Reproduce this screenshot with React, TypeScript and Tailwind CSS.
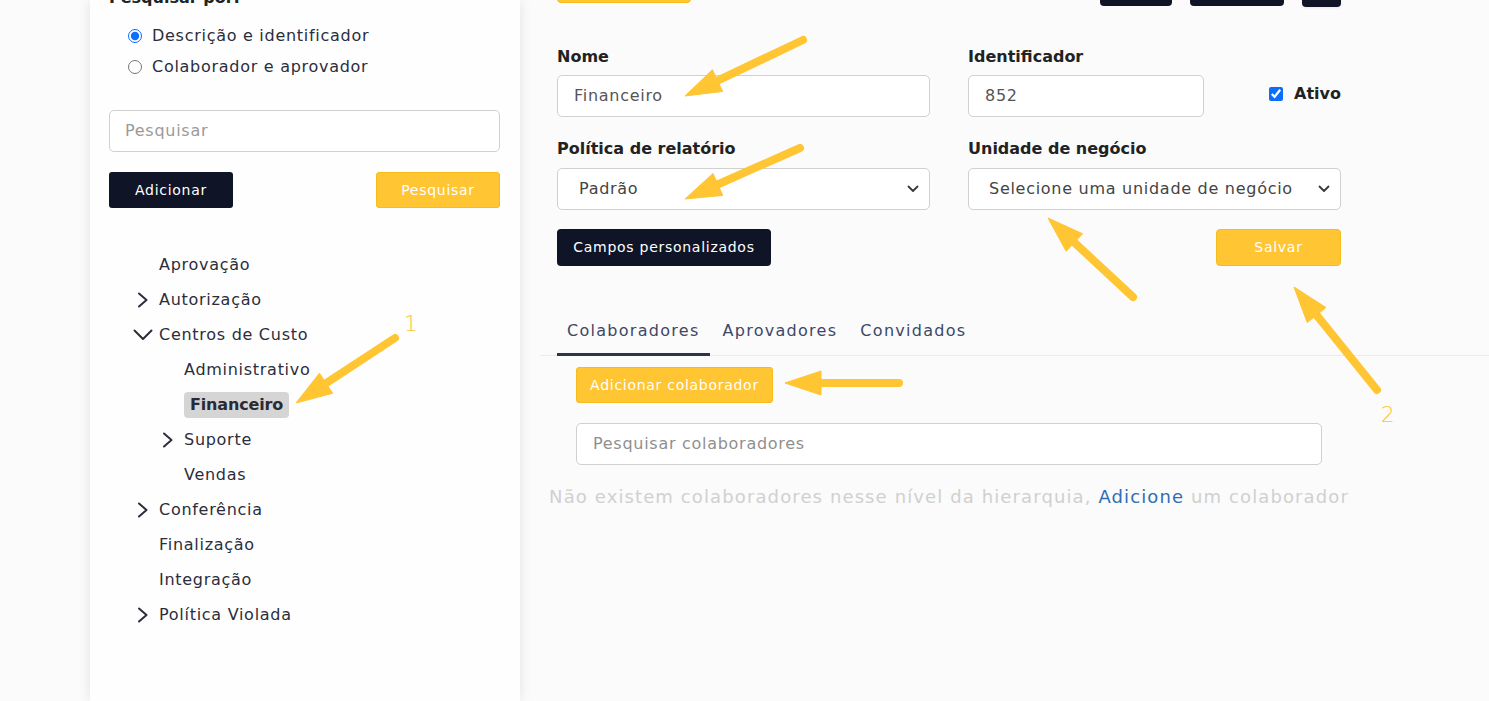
import React from "react";

type Pt = [number, number];

function Arrow({ from, to }: { from: Pt; to: Pt }) {
  const [x1, y1] = from;
  const [x2, y2] = to;
  const dx = x2 - x1;
  const dy = y2 - y1;
  const len = Math.hypot(dx, dy);
  const ux = dx / len;
  const uy = dy / len;
  const L = 36;
  const W = 12;
  const bx = x2 - ux * L;
  const by = y2 - uy * L;
  const nx = -uy;
  const ny = ux;
  const pts = `${x2},${y2} ${bx + nx * W},${by + ny * W} ${bx - nx * W},${by - ny * W}`;
  return (
    <g>
      <line x1={x1} y1={y1} x2={bx + ux * 4} y2={by + uy * 4} stroke="#ffc532" strokeWidth={8} strokeLinecap="round" />
      <polygon points={pts} fill="#ffc532" stroke="#ffc532" strokeWidth={1} strokeLinejoin="round" />
    </g>
  );
}

function ChevronRight() {
  return (
    <svg width="12" height="16" viewBox="0 0 12 16" className="block">
      <polyline points="2,1.5 9.5,8 2,14.5" fill="none" stroke="#2b2d3c" strokeWidth="2" strokeLinecap="round" strokeLinejoin="round" />
    </svg>
  );
}

function ChevronDown() {
  return (
    <svg width="20" height="12" viewBox="0 0 20 12" className="block">
      <polyline points="1.5,1.5 10,10 18.5,1.5" fill="none" stroke="#2b2d3c" strokeWidth="2" strokeLinecap="round" strokeLinejoin="round" />
    </svg>
  );
}

function SelectChevron() {
  return (
    <svg width="12" height="8" viewBox="0 0 12 8" className="block">
      <polyline points="1.5,1.5 6,6 10.5,1.5" fill="none" stroke="#343a40" strokeWidth="1.8" strokeLinecap="round" strokeLinejoin="round" />
    </svg>
  );
}

type TreeItem = { label: string; level: 1 | 2; chevron?: "right" | "down"; selected?: boolean };

const tree: TreeItem[] = [
  { label: "Aprovação", level: 1 },
  { label: "Autorização", level: 1, chevron: "right" },
  { label: "Centros de Custo", level: 1, chevron: "down" },
  { label: "Administrativo", level: 2 },
  { label: "Financeiro", level: 2, selected: true },
  { label: "Suporte", level: 2, chevron: "right" },
  { label: "Vendas", level: 2 },
  { label: "Conferência", level: 1, chevron: "right" },
  { label: "Finalização", level: 1 },
  { label: "Integração", level: 1 },
  { label: "Política Violada", level: 1, chevron: "right" },
];

export default function App() {
  return (
    <div className="relative flex w-[1489px] h-[701px] overflow-hidden bg-[#fbfbfb] font-['DejaVu_Sans',sans-serif] tracking-[0.045em] text-[#2b2d3c]">
      <div className="w-[90px] shrink-0" />
      {/* Left panel */}
      <aside className="w-[430px] shrink-0 h-full bg-[#fefefe] shadow-[0_0_12px_rgba(0,0,0,0.10)] pl-[19px] pr-[20px] z-10">
        <div className="-mt-[14px] h-[24px] leading-[24px] text-[16px] font-bold tracking-normal text-[#222]">Pesquisar por:</div>
        <div className="mt-[10px] flex flex-col">
          <label className="flex h-[31px] items-center gap-[10px] pl-[19px] text-[16px]">
            <input type="radio" name="por" defaultChecked className="m-0 w-[14px] h-[14px] accent-[#0d6efd]" />
            <span>Descrição e identificador</span>
          </label>
          <label className="flex h-[31px] items-center gap-[10px] pl-[19px] text-[16px]">
            <input type="radio" name="por" className="m-0 w-[14px] h-[14px]" />
            <span>Colaborador e aprovador</span>
          </label>
        </div>
        <div className="mt-[28px] h-[42px] rounded-[5px] border border-[#d0d0d0] bg-white flex items-center px-[15px] text-[16px] text-[#9a9a9a]">
          Pesquisar
        </div>
        <div className="mt-[20px] flex justify-between">
          <div className="w-[124px] h-[36px] rounded-[3px] bg-[#0f1427] text-white text-[14px] flex items-center justify-center">Adicionar</div>
          <div className="w-[124px] h-[36px] rounded-[3px] bg-[#ffc532] border border-[#f7bb1c] text-white text-[14px] flex items-center justify-center">Pesquisar</div>
        </div>
        <div className="mt-[39px] flex flex-col">
          {tree.map((t) => (
            <div key={t.label} className={`flex h-[35px] items-center ${t.level === 1 ? "pl-[28px]" : "pl-[53px]"}`}>
              <div className="w-[22px] shrink-0 flex items-center">
                {t.chevron === "right" && <ChevronRight />}
                {t.chevron === "down" && <div className="-ml-[4px]"><ChevronDown /></div>}
              </div>
              {t.selected ? (
                <span className="h-[26px] leading-[26px] px-[6px] rounded-[4px] bg-[#d5d5d5] text-[16px] font-bold tracking-[-0.01em] text-[#2a2a35]">{t.label}</span>
              ) : (
                <span className="text-[16px]">{t.label}</span>
              )}
            </div>
          ))}
        </div>
      </aside>

      {/* Main */}
      <main className="flex-1 h-full flex flex-col">
        <div className="flex h-[7px] items-start pl-[37px] pr-[148px] justify-between">
          <div className="w-[134px] h-[36px] -mt-[33px] rounded-[4px] bg-[#ffc532] border border-[#f7bb1c]" />
          <div className="flex gap-[18px]">
            <div className="w-[72px] h-[36px] -mt-[30px] rounded-[4px] bg-[#0f1427]" />
            <div className="w-[94px] h-[36px] -mt-[30px] rounded-[4px] bg-[#0f1427]" />
            <div className="w-[39px] h-[36px] -mt-[29px] rounded-[4px] bg-[#0f1427] shadow-[0_1px_3px_rgba(0,0,0,0.08)]" />
          </div>
        </div>

        <div className="ml-[37px] w-[784px] mt-[38px] grid grid-cols-2 gap-x-[38px]">
          <div>
            <div className="h-[24px] leading-[24px] text-[16px] font-bold tracking-normal text-[#222]">Nome</div>
            <div className="mt-[6px] h-[42px] rounded-[5px] border border-[#d0d0d0] bg-white flex items-center px-[16px] text-[16px] text-[#555]">Financeiro</div>
          </div>
          <div>
            <div className="h-[24px] leading-[24px] text-[16px] font-bold tracking-normal text-[#222]">Identificador</div>
            <div className="mt-[6px] flex items-center">
              <div className="w-[236px] h-[42px] rounded-[5px] border border-[#d0d0d0] bg-white flex items-center px-[16px] text-[16px] text-[#555]">852</div>
              <label className="ml-auto flex items-center gap-[11px] text-[16px] font-bold tracking-normal text-[#222] -mt-[4px]">
                <input type="checkbox" defaultChecked className="m-0 w-[14px] h-[14px] accent-[#0d6efd]" />
                <span>Ativo</span>
              </label>
            </div>
          </div>

          <div className="mt-[20px]">
            <div className="h-[24px] leading-[24px] text-[16px] font-bold tracking-normal text-[#222]">Política de relatório</div>
            <div className="mt-[7px] h-[42px] rounded-[5px] border border-[#d0d0d0] bg-white flex items-center justify-between pl-[21px] pr-[10px] text-[16px] text-[#444]">
              <span>Padrão</span>
              <SelectChevron />
            </div>
          </div>
          <div className="mt-[20px]">
            <div className="h-[24px] leading-[24px] text-[16px] font-bold tracking-normal text-[#222]">Unidade de negócio</div>
            <div className="mt-[7px] h-[42px] rounded-[5px] border border-[#d0d0d0] bg-white flex items-center justify-between pl-[20px] pr-[10px] text-[16px] text-[#444]">
              <span>Selecione uma unidade de negócio</span>
              <SelectChevron />
            </div>
          </div>

          <div className="mt-[19px]">
            <div className="w-[214px] h-[37px] rounded-[4px] bg-[#0f1427] text-white text-[14px] font-medium flex items-center justify-center">Campos personalizados</div>
          </div>
          <div className="mt-[19px] flex justify-end">
            <div className="w-[125px] h-[37px] rounded-[4px] bg-[#ffc532] border border-[#f7bb1c] text-white text-[14px] flex items-center justify-center">Salvar</div>
          </div>
        </div>

        <div className="ml-[20px] mt-[40px] border-b border-[#ebebeb] pl-[17px] flex gap-[3px] tracking-[0.08em]">
          <div className="h-[50px] pt-[3px] px-[10px] flex items-center border-b-[3px] border-[#2f334d] -mb-px text-[16px] text-[#3d4766]">Colaboradores</div>
          <div className="h-[50px] pt-[3px] px-[10px] flex items-center border-b-[3px] border-transparent -mb-px text-[16px] text-[#3d4766]">Aprovadores</div>
          <div className="h-[50px] pt-[3px] px-[10px] flex items-center border-b-[3px] border-transparent -mb-px text-[16px] text-[#3d4766]">Convidados</div>
        </div>

        <div className="ml-[37px] w-[784px] px-[19px]">
          <div className="mt-[11px] w-[197px] h-[36px] rounded-[3px] bg-[#ffc532] border border-[#f7bb1c] text-white text-[14px] flex items-center justify-center">Adicionar colaborador</div>
          <div className="mt-[20px] h-[42px] rounded-[5px] border border-[#d0d0d0] bg-white flex items-center px-[16px] text-[16px] text-[#8f8f8f]">Pesquisar colaboradores</div>
        </div>
        <div className="ml-[37px] w-[784px] mt-[18px] flex justify-center">
          <div className="whitespace-nowrap h-[27px] leading-[27px] text-[18px] tracking-[0.062em] text-[#d0d0d0]">
            Não existem colaboradores nesse nível da hierarquia, <span className="text-[#2f6db5]">Adicione</span> um colaborador
          </div>
        </div>
      </main>

      {/* Annotation overlay */}
      <svg className="absolute inset-0 pointer-events-none z-20" width="1489" height="701" viewBox="0 0 1489 701">
        <Arrow from={[803, 40]} to={[685, 96]} />
        <Arrow from={[800, 148]} to={[685, 199]} />
        <Arrow from={[1133, 297]} to={[1048, 218]} />
        <Arrow from={[1377, 390]} to={[1294, 287]} />
        <Arrow from={[899, 383]} to={[785, 383]} />
        <Arrow from={[395, 338]} to={[296, 403]} />
        <text x="411" y="331" textAnchor="middle" fontSize="22" fontWeight="300" fill="#ffc532" fontFamily="DejaVu Sans, sans-serif">1</text>
        <text x="1388" y="422" textAnchor="middle" fontSize="22" fontWeight="300" fill="#ffc532" fontFamily="DejaVu Sans, sans-serif">2</text>
      </svg>
    </div>
  );
}
